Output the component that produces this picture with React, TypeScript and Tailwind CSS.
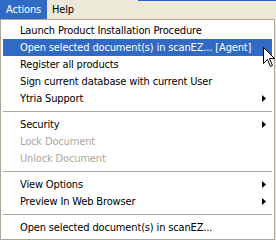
import React from "react";

type Item =
  | { kind: "item"; label: string; arrow?: boolean; disabled?: boolean; active?: boolean }
  | { kind: "sep" };

const items: Item[] = [
  { kind: "item", label: "Launch Product Installation Procedure" },
  { kind: "item", label: "Open selected document(s) in scanEZ... [Agent]", active: true },
  { kind: "item", label: "Register all products" },
  { kind: "item", label: "Sign current database with current User" },
  { kind: "item", label: "Ytria Support", arrow: true },
  { kind: "sep" },
  { kind: "item", label: "Security", arrow: true },
  { kind: "item", label: "Lock Document", disabled: true },
  { kind: "item", label: "Unlock Document", disabled: true },
  { kind: "sep" },
  { kind: "item", label: "View Options", arrow: true },
  { kind: "item", label: "Preview In Web Browser", arrow: true },
  { kind: "sep" },
  { kind: "item", label: "Open selected document(s) in scanEZ..." },
];

function Arrow({ color }: { color: string }) {
  return (
    <svg width="4" height="7" viewBox="0 0 4 7" className="block">
      <path d="M0 0 L4 3.5 L0 7 Z" fill={color} />
    </svg>
  );
}

export default function App() {
  return (
    <div
      className="relative w-[276px] h-[240px] bg-[#ECE9D8] overflow-hidden text-[11px] leading-none text-black tracking-[-0.15px]"
      style={{ fontFamily: "Tahoma, 'DejaVu Sans Condensed', 'DejaVu Sans', sans-serif" }}
    >
      <div className="absolute top-0 left-[138px] right-0 h-px bg-[#2F5FC8]" />
      <div className="flex h-[19px] items-stretch">
        <div className="flex items-center bg-[#316AC5] text-white pl-[6px] w-[47px]">Actions</div>
        <div className="flex items-center pl-[5px]">Help</div>
      </div>
      <div className="w-[275px] h-[221px] bg-white border border-[#ACA899] p-[2px] flex flex-col">
        {items.map((it, i) =>
          it.kind === "sep" ? (
            <div key={i} className="h-[9px] flex items-center">
              <div className="h-px w-full bg-[#ACA899]" />
            </div>
          ) : (
            <div
              key={i}
              className={
                "h-[17px] flex items-center pl-[17px] pr-[6px] " +
                (it.active ? "bg-[#316AC5] text-white" : it.disabled ? "text-[#ACA899]" : "")
              }
            >
              <span className="flex-1 whitespace-nowrap">{it.label}</span>
              {it.arrow && <Arrow color="#000" />}
            </div>
          )
        )}
      </div>
      <svg
        className="absolute left-[263px] top-[47px]"
        width="13"
        height="21"
        viewBox="0 0 13 21"
      >
        <path
          d="M0.5 0.5 L0.5 16.5 L4.5 12.5 L7.5 19.5 L9.5 18.5 L6.5 11.5 L11.5 11.5 Z"
          fill="#fff"
          stroke="#000"
          strokeWidth="1"
          strokeLinejoin="miter"
        />
      </svg>
    </div>
  );
}
